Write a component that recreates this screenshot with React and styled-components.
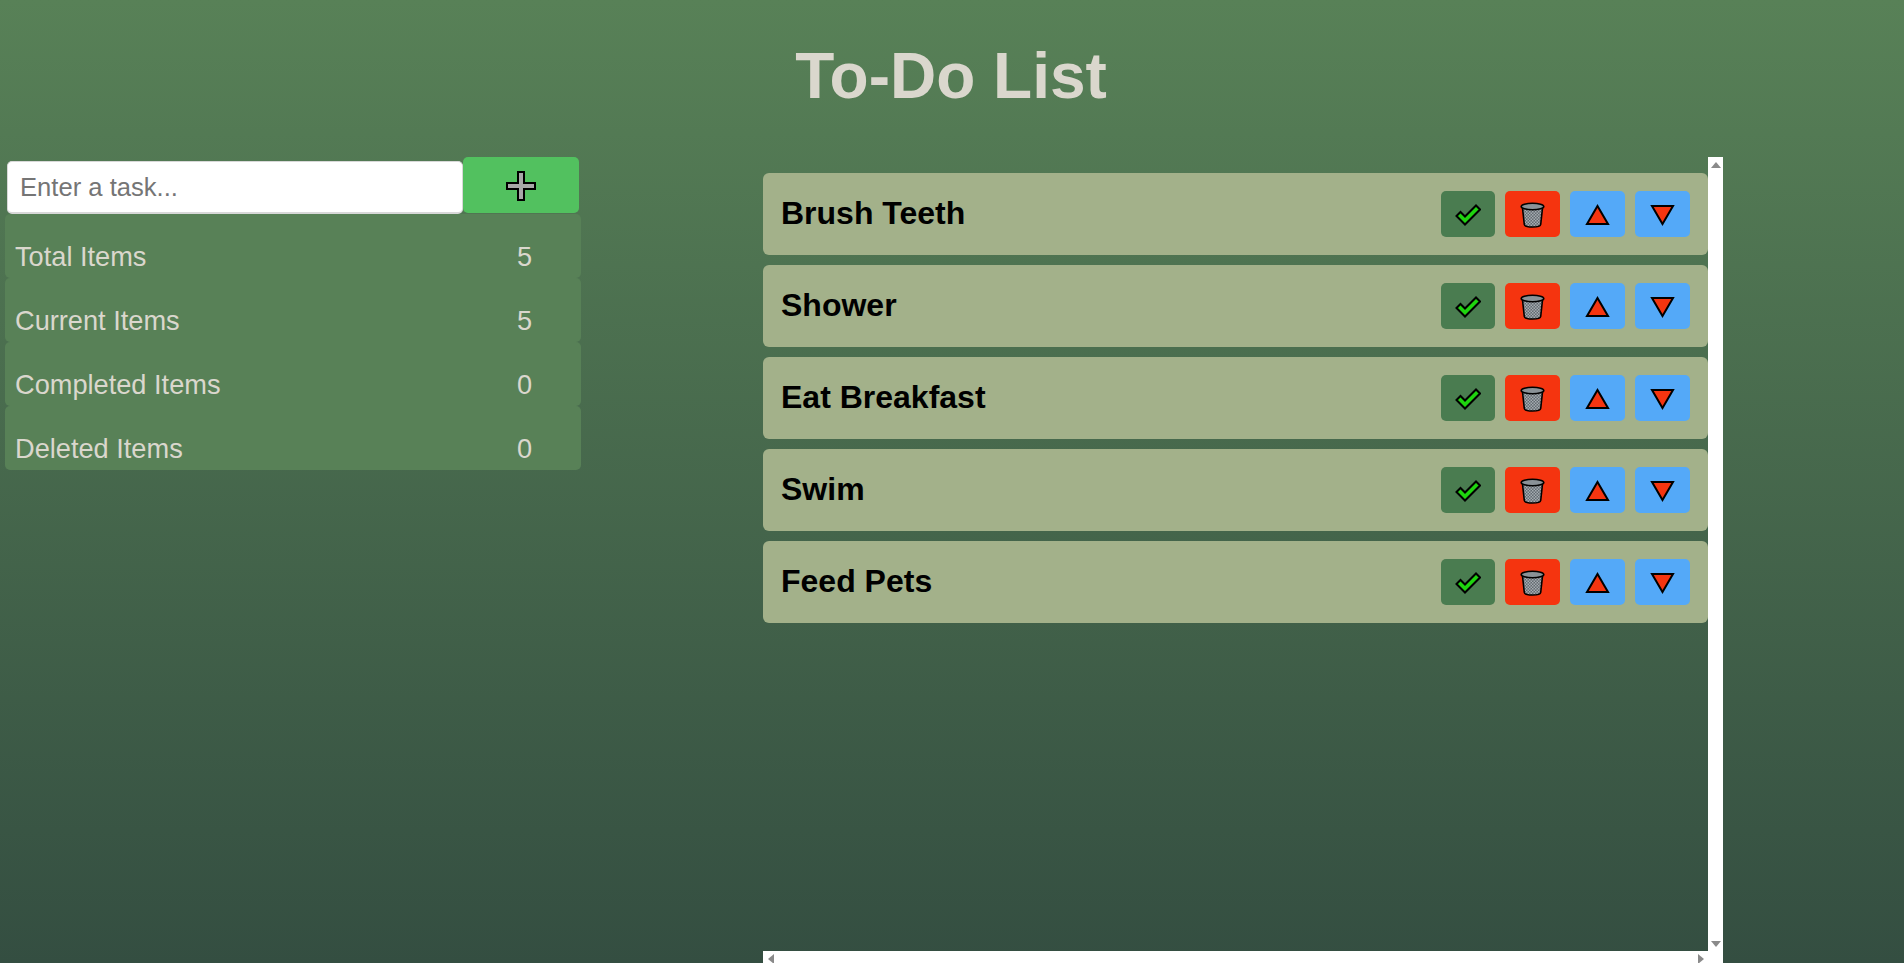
import React from "react";
import styled, { createGlobalStyle } from "styled-components";

const Global = createGlobalStyle`
  html, body { margin: 0; height: 100%; overflow: hidden; }
  body { font-family: "Liberation Sans", Arial, sans-serif; }
`;

const Page = styled.div`
  height: 100vh;
  background: linear-gradient(#588157, #344e41);
`;

const Title = styled.h1`
  margin: 0;
  height: 157px;
  box-sizing: border-box;
  padding: 39px 2px 0 0;
  text-align: center;
  font-size: 64px;
  line-height: 74px;
  font-weight: 700;
  color: #dad7cd;
`;

const Main = styled.main`
  display: flex;
  align-items: flex-start;
  gap: 182px;
`;

const Sidebar = styled.section`
  flex: none;
  width: 576px;
  margin-left: 5px;
`;

const Form = styled.form`
  display: flex;
  align-items: flex-end;
  margin: 0 2px;
`;

const TaskInput = styled.input`
  width: 456px;
  height: 53px;
  box-sizing: border-box;
  padding: 0 12px;
  border: 1px solid #d8d8d8;
  border-bottom-width: 2px;
  border-radius: 5px;
  background: #fff;
  font: 25.6px "Liberation Sans", Arial, sans-serif;
  color: #222;
  outline: none;
  &::placeholder { color: #757575; opacity: 1; }
`;

const AddButton = styled.button`
  width: 116px;
  height: 56px;
  margin-bottom: 1px;
  padding: 2px 0 0;
  border: 0;
  border-radius: 5px;
  background: #52c15f;
  display: flex;
  align-items: center;
  justify-content: center;
`;

const Stat = styled.div`
  height: 64px;
  box-sizing: border-box;
  display: flex;
  align-items: flex-end;
  justify-content: space-between;
  padding: 0 49px 6px 10px;
  border-radius: 5px;
  background: #588157;
  color: #dad7cd;
  font-size: 27.2px;
  line-height: 30px;
`;

const Frame = styled.div`
  flex: none;
  width: 960px;
  height: 809px;
  display: grid;
  grid-template-columns: 945px 15px;
  grid-template-rows: 794px 15px;
`;

const Scroller = styled.div`
  overflow: hidden;
`;

const ScrollBar = styled.div`
  display: flex;
  flex-direction: ${(p) => (p.$horizontal ? "row" : "column")};
  justify-content: space-between;
  background: #fff;
`;

const ArrowBox = styled.span`
  width: 15px;
  height: 15px;
  display: flex;
  align-items: center;
  justify-content: center;
`;

const Corner = styled.div`
  background: #fff;
`;

const TaskList = styled.ol`
  list-style: none;
  margin: 16px 0 0;
  padding: 0;
`;

const Task = styled.li`
  height: 82px;
  margin-bottom: 10px;
  box-sizing: border-box;
  padding: 0 18px;
  display: flex;
  align-items: center;
  justify-content: space-between;
  border-radius: 6px;
  background: #a3b18a;
`;

const TaskName = styled.span`
  font-size: 32px;
  line-height: 37px;
  font-weight: 700;
  color: #000;
  margin-bottom: 2px;
`;

const Actions = styled.div`
  display: flex;
  gap: 10px;
`;

const IconButton = styled.button`
  width: ${(p) => p.$w || 55}px;
  height: 46px;
  padding: 2px 0 0;
  border: 0;
  border-radius: 5px;
  background: ${(p) => p.$bg};
  display: flex;
  align-items: center;
  justify-content: center;
`;

const ARROWS = { up: "M5 0L10 6H0z", down: "M0 0h10L5 6z", left: "M6 0v10L0 5z", right: "M0 0l6 5L0 10z" };

const Arrow = ({ dir }) => {
  const flat = dir === "up" || dir === "down";
  return (
    <ArrowBox>
      <svg width={flat ? 10 : 6} height={flat ? 6 : 10} viewBox={flat ? "0 0 10 6" : "0 0 6 10"}>
        <path d={ARROWS[dir]} fill="#8a8a8a" />
      </svg>
    </ArrowBox>
  );
};

const PlusIcon = () => (
  <svg width="32" height="32" viewBox="0 0 32 32">
    <path d="M13 2h6v11h11v6H19v11h-6V19H2v-6h11z" fill="#a8a8a8" stroke="#000" strokeWidth="2" />
  </svg>
);

const CheckIcon = () => (
  <svg width="26" height="22" viewBox="0 0 26 22">
    <path d="M1.500 12l4-4 4.500 4.500L21 1.500l4 4L10 20.500z" fill="#1fd40f" stroke="#000" strokeWidth="2" />
  </svg>
);

const TrashIcon = () => (
  <svg width="25" height="26" viewBox="0 0 25 26">
    <defs>
      <pattern id="mesh" width="3" height="3" patternUnits="userSpaceOnUse">
        <rect width="3" height="3" fill="#626a70" />
        <rect width="1.500" height="1.500" fill="#a5acb1" />
        <rect x="1.500" y="1.500" width="1.500" height="1.500" fill="#a5acb1" />
      </pattern>
    </defs>
    <path d="M2.500 6l1.800 16.500c.2 1.500 3.700 2.500 8.200 2.500s8-1 8.200-2.500L22.500 6z" fill="url(#mesh)" stroke="#000" strokeWidth="1.600" />
    <ellipse cx="12.500" cy="4.500" rx="11.300" ry="3.300" fill="#8a9297" stroke="#000" strokeWidth="1.600" />
  </svg>
);

const TriangleIcon = ({ down }) => (
  <svg width="25" height="22" viewBox="0 0 25 22">
    <path d={down ? "M2 2h21L12.500 20z" : "M12.500 2L23 20H2z"} fill="#f53510" stroke="#000" strokeWidth="2" />
  </svg>
);

const stats = [
  ["Total Items", 5],
  ["Current Items", 5],
  ["Completed Items", 0],
  ["Deleted Items", 0],
];
const tasks = ["Brush Teeth", "Shower", "Eat Breakfast", "Swim", "Feed Pets"];

export default function App() {
  return (
    <Page>
      <Global />
      <Title>To-Do List</Title>
      <Main>
        <Sidebar>
          <Form onSubmit={(e) => e.preventDefault()}>
            <TaskInput placeholder="Enter a task..." />
            <AddButton type="submit" aria-label="Add"><PlusIcon /></AddButton>
          </Form>
          {stats.map(([label, value]) => (
            <Stat key={label}><span>{label}</span><span>{value}</span></Stat>
          ))}
        </Sidebar>
        <Frame>
          <Scroller>
            <TaskList>
              {tasks.map((t) => (
                <Task key={t}>
                  <TaskName>{t}</TaskName>
                  <Actions>
                    <IconButton $bg="#4a7c50" $w={54} aria-label="Complete"><CheckIcon /></IconButton>
                    <IconButton $bg="#f5340f" aria-label="Delete"><TrashIcon /></IconButton>
                    <IconButton $bg="#54a9f8" aria-label="Move up"><TriangleIcon /></IconButton>
                    <IconButton $bg="#54a9f8" aria-label="Move down"><TriangleIcon down /></IconButton>
                  </Actions>
                </Task>
              ))}
            </TaskList>
          </Scroller>
          <ScrollBar><Arrow dir="up" /><Arrow dir="down" /></ScrollBar>
          <ScrollBar $horizontal><Arrow dir="left" /><Arrow dir="right" /></ScrollBar>
          <Corner />
        </Frame>
      </Main>
    </Page>
  );
}
